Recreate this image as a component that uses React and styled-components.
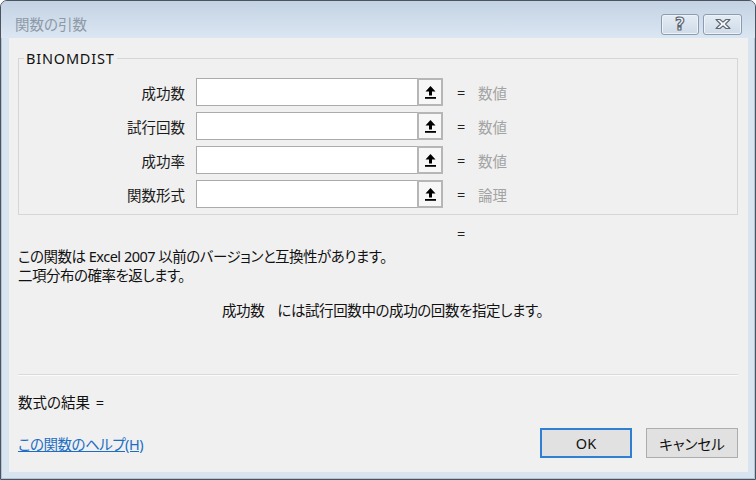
import styled, { createGlobalStyle } from 'styled-components';

const GlobalStyle = createGlobalStyle`
  html, body {
    margin: 0;
    padding: 0;
    width: 756px;
    height: 480px;
    overflow: hidden;
    background: #ffffff;
  }
  body {
    font-family: "Noto Sans", "Noto Sans CJK JP", sans-serif;
    font-feature-settings: "palt";
    font-size: 14.5px;
    color: #1a1a1a;
  }
`;

const Window = styled.div`
  box-sizing: border-box;
  width: 756px;
  height: 480px;
  display: flex;
  flex-direction: column;
  background: #d9e4f1;
  border: 1px solid #4a535e;
  border-radius: 7px 7px 0 0;
  box-shadow: inset 0 0 0 1px #b4c3d3;
  overflow: hidden;
`;

const TitleBar = styled.div`
  box-sizing: border-box;
  height: 37px;
  flex: none;
  display: flex;
  align-items: center;
  padding: 9px 13px 0 14px;
  background: linear-gradient(#c3d2e3, #dbe6f2);
`;

const TitleText = styled.div`
  flex: 1;
  color: #8d99a6;
  font-size: 14.5px;
  line-height: 28px;
`;

const CaptionButton = styled.button`
  box-sizing: border-box;
  width: ${(p) => p.$w}px;
  height: 21px;
  margin-left: ${(p) => p.$gap || 0}px;
  padding: 0;
  display: flex;
  align-items: center;
  justify-content: center;
  border: 1px solid #8b9bb0;
  border-radius: 3px;
  background: linear-gradient(#e4ecf5, #cfdbe8);
  box-shadow: inset 0 0 0 1px #eef3f9;
`;

const HelpGlyph = styled.span`
  font-family: "DejaVu Sans", sans-serif;
  font-weight: bold;
  font-size: 17px;
  line-height: 1;
  color: #f4f6f9;
  -webkit-text-stroke: 1.2px #5d6670;
`;

const Body = styled.div`
  flex: 1;
  display: flex;
  flex-direction: column;
  margin: 0 7px 7px 8px;
  padding: 11px 10px 14px 9px;
  background: #f0f0f0;
`;

const GroupBox = styled.fieldset`
  margin: 0;
  padding: 0 0 6px 0;
  min-inline-size: 0;
  border: 1px solid #d6d6d6;
  border-radius: 0;
`;

const Legend = styled.legend`
  margin-left: 5px;
  padding: 0 2px;
  line-height: 18px;
  letter-spacing: 0.8px;
  color: #111;
`;

const Rows = styled.div`
  display: flex;
  flex-direction: column;
  gap: 6px;
  margin-top: 11px;
`;

const Row = styled.div`
  display: flex;
  align-items: center;
  height: 28px;
`;

const ArgLabel = styled.div`
  width: 166px;
  text-align: right;
  color: #1a1a1a;
`;

const InputBox = styled.div`
  box-sizing: border-box;
  width: 221px;
  height: 28px;
  margin-left: 11px;
  background: #ffffff;
  border: 1px solid #ababab;
  border-right: none;
`;

const RefButton = styled.div`
  box-sizing: border-box;
  width: 26px;
  height: 28px;
  display: flex;
  align-items: center;
  justify-content: center;
  background: #f7f7f7;
  border: 2px solid #b6b6b6;
`;

const Eq = styled.span`
  display: inline-block;
  width: 21px;
  margin-left: ${(p) => p.$ml || 0}px;
  color: #222;
`;

const TypeText = styled.span`
  color: #a3a3a3;
`;

const ResultEq = styled.div`
  margin: 9px 0 0 439px;
  line-height: 19px;
  color: #222;
`;

const Description = styled.div`
  margin-top: 4px;
  line-height: 19px;
  letter-spacing: -0.5px;
  color: #111;
`;

const ArgHelp = styled.div`
  display: flex;
  gap: 13px;
  margin: 16px 0 0 204px;
  line-height: 19px;
  letter-spacing: -0.4px;
  color: #111;
`;

const Spacer = styled.div`
  flex: 1;
`;

const Separator = styled.div`
  border-top: 1px solid #dadada;
  border-bottom: 1px solid #fbfbfb;
`;

const FormulaResult = styled.div`
  margin-top: 17px;
  line-height: 19px;
  word-spacing: 2px;
  color: #111;
`;

const Footer = styled.div`
  display: flex;
  align-items: center;
  margin-top: 16px;
`;

const HelpLink = styled.a`
  flex: 1;
  color: #1c6ec4;
  text-decoration: underline;
  letter-spacing: -0.5px;
  cursor: pointer;
`;

const DialogButton = styled.button`
  box-sizing: border-box;
  width: ${(p) => p.$w}px;
  height: 30px;
  margin-left: ${(p) => p.$gap || 0}px;
  font-family: inherit;
  font-feature-settings: "palt";
  font-size: 14.5px;
  color: #111;
  background: #e1e1e1;
  border: ${(p) => (p.$default ? '2px solid #2f7fd3' : '1px solid #adadad')};
  border-radius: 0;
  padding: 0;
`;

const UploadIcon = () => (
  <svg width="11" height="13" viewBox="0 0 11 13">
    <path d="M5.5 0 L10.5 5.5 H7 V9.5 H4 V5.5 H0.5 Z" fill="#000" />
    <rect x="0" y="11" width="11" height="1.8" fill="#000" />
  </svg>
);

const CloseIcon = () => (
  <svg width="18" height="12" viewBox="0 0 18 12">
    <path
      d="M2 1.5 H6 L9 4.2 L12 1.5 H16 L11.5 6 L16 10.5 H12 L9 7.8 L6 10.5 H2 L6.5 6 Z"
      fill="#f4f6f9"
      stroke="#5d6670"
      strokeWidth="1.1"
      strokeLinejoin="round"
    />
  </svg>
);

const args = [
  { name: '成功数', type: '数値' },
  { name: '試行回数', type: '数値' },
  { name: '成功率', type: '数値' },
  { name: '関数形式', type: '論理' },
];

export default function App() {
  return (
    <>
      <GlobalStyle />
      <Window>
        <TitleBar>
          <TitleText>関数の引数</TitleText>
          <CaptionButton $w={38}>
            <HelpGlyph>?</HelpGlyph>
          </CaptionButton>
          <CaptionButton $w={39} $gap={4}>
            <CloseIcon />
          </CaptionButton>
        </TitleBar>
        <Body>
          <GroupBox>
            <Legend>BINOMDIST</Legend>
            <Rows>
              {args.map((a) => (
                <Row key={a.name}>
                  <ArgLabel>{a.name}</ArgLabel>
                  <InputBox />
                  <RefButton>
                    <UploadIcon />
                  </RefButton>
                  <Eq $ml={14}>=</Eq>
                  <TypeText>{a.type}</TypeText>
                </Row>
              ))}
            </Rows>
          </GroupBox>
          <ResultEq>=</ResultEq>
          <Description>
            この関数は Excel 2007 以前のバージョンと互換性があります。
            <br />
            二項分布の確率を返します。
          </Description>
          <ArgHelp>
            <span>成功数</span>
            <span>には試行回数中の成功の回数を指定します。</span>
          </ArgHelp>
          <Spacer />
          <Separator />
          <FormulaResult>数式の結果 =</FormulaResult>
          <Footer>
            <HelpLink>この関数のヘルプ(H)</HelpLink>
            <DialogButton $w={92} $default>OK</DialogButton>
            <DialogButton $w={92} $gap={14}>キャンセル</DialogButton>
          </Footer>
        </Body>
      </Window>
    </>
  );
}
